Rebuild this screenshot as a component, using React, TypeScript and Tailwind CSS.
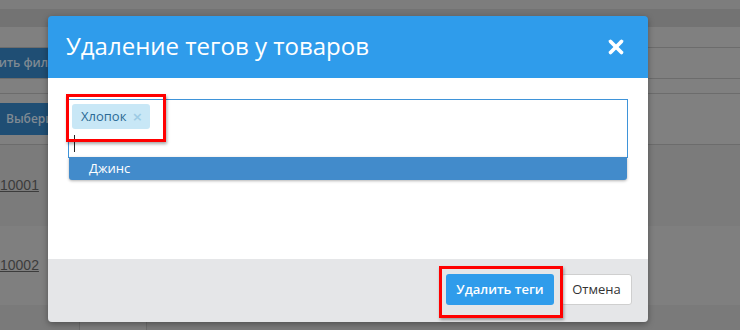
import { X } from "lucide-react";

const font = { fontFamily: '"Open Sans", "Noto Sans", sans-serif' };

export default function App() {
  return (
    <div className="relative w-[740px] h-[330px] overflow-hidden bg-[#808080]" style={font}>
      {/* Page behind the overlay */}
      <div className="flex flex-col">
        <div className="h-[9px] bg-[#7d7d7d]" />
        <div className="h-[18px] bg-[#737373]" />
        <div className="h-[21px] border-b border-[#6c6c6c]" />
        <div className="h-[31px] border-b border-[#6c6c6c] flex">
          <div className="w-[48px] bg-[#1f4e74] flex items-center justify-end overflow-hidden text-[12px] font-semibold text-[#7f8a93] whitespace-nowrap">
            вить фил
          </div>
        </div>
        <div className="h-[15px] border-b border-[#6c6c6c]" />
        <div className="h-[51px] border-b border-[#6c6c6c] flex items-center">
          <div className="w-[48px] h-[32px] bg-[#1f4e74] flex items-center pl-[6px] overflow-hidden text-[12px] font-semibold text-[#7f8a93] whitespace-nowrap">
            Выбери
          </div>
        </div>
        <div className="h-[81px] bg-[#7b7b7b] flex items-center">
          <span className="text-[14px] text-[#3c3c3c] underline" style={{ fontFamily: '"Liberation Sans", sans-serif' }}>10001</span>
        </div>
        <div className="h-[79px] bg-[#7f7f7f] flex items-center">
          <span className="text-[14px] text-[#3c3c3c] underline" style={{ fontFamily: '"Liberation Sans", sans-serif' }}>10002</span>
        </div>
        <div className="h-[30px] bg-[#7a7a7a] pl-[79px]">
          <div className="w-[68px] h-[30px] mt-[12px] border-x border-[#6d6d6d] bg-[#7e7e7e]" />
        </div>
      </div>

      {/* Modal */}
      <div className="absolute left-[48px] top-[16px] w-[600px] rounded-[4px] overflow-hidden shadow-[0_2px_6px_rgba(0,0,0,0.35)]">
        <div className="h-[62px] bg-[#2f9ceb] flex items-center justify-between pl-[18px] pr-[21px]">
          <h2 className="text-[24px] text-white leading-none pb-[2px]">Удаление тегов у товаров</h2>
          <X size={22} strokeWidth={4} className="text-white" />
        </div>
        <div className="h-[181px] bg-white pt-[21px] px-[20px]">
          <div className="relative">
            <div className="h-[59px] border border-b-0 border-[#3f94d9] p-[3px]">
              <div className="inline-flex items-center h-[25px] w-[78px] rounded-[3px] bg-[#c8e7f6] pl-[9px] gap-[6px] text-[13px] text-[#2b6a95]">
                Хлопок
                <span className="text-[#9dcbe4] text-[17px] leading-none font-semibold">×</span>
              </div>
              <div className="ml-[2px] mt-[6px] w-px h-[17px] bg-[#222]" />
            </div>
            <div className="absolute left-px right-px top-[58px] h-[23px] bg-[#428bcb] rounded-b-[3px] shadow-[0_1px_3px_rgba(0,0,0,0.3)] pl-[20px] flex items-center text-[13px] text-white">
              Джинс
            </div>
            <div className="absolute left-[-2px] top-[-5px] w-[100px] h-[48px] border-[3px] border-[#ff0000] shadow-[1px_2px_3px_rgba(0,0,0,0.35)]" />
          </div>
        </div>
        <div className="h-[63px] bg-[#e5e6e8] flex justify-end items-start pt-[15px] pr-[16px] gap-[7px]">
          <div className="relative">
            <button className="h-[31px] w-[108px] rounded-[3px] bg-[#2f9ceb] text-white text-[13px] font-semibold">
              Удалить теги
            </button>
            <div className="absolute left-[-7px] top-[-8px] w-[124px] h-[52px] border-[3px] border-[#ff0000] shadow-[1px_2px_3px_rgba(0,0,0,0.35)]" />
          </div>
          <button className="h-[31px] w-[71px] rounded-[3px] bg-white border border-[#cfcfcf] text-[#333] text-[13px]">
            Отмена
          </button>
        </div>
      </div>
    </div>
  );
}
